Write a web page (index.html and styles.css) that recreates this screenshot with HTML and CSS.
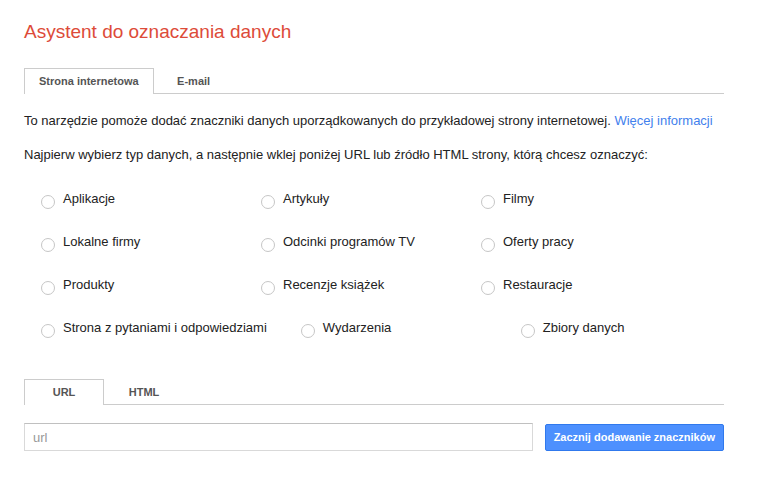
FILE: index.html
```html
<!DOCTYPE html>
<html lang="pl">
<head>
  <meta charset="UTF-8">
  <meta name="viewport" content="width=device-width, initial-scale=1.0">
  <title>Asystent do oznaczania danych</title>
  <link rel="stylesheet" href="styles.css">
</head>
<body>
  <div class="page">
    <h1 class="title">Asystent do oznaczania danych</h1>

    <div class="tabs">
      <div class="tab active">Strona internetowa</div>
      <div class="tab">E-mail</div>
    </div>

    <p class="intro">To narzędzie pomoże dodać znaczniki danych uporządkowanych do przykładowej strony internetowej. <a href="#">Więcej informacji</a></p>
    <p class="intro second">Najpierw wybierz typ danych, a następnie wklej poniżej URL lub źródło HTML strony, którą chcesz oznaczyć:</p>

    <div class="types">
      <div class="type-row">
        <label class="type"><span class="radio"></span>Aplikacje</label>
        <label class="type"><span class="radio"></span>Artykuły</label>
        <label class="type"><span class="radio"></span>Filmy</label>
      </div>
      <div class="type-row">
        <label class="type"><span class="radio"></span>Lokalne firmy</label>
        <label class="type"><span class="radio"></span>Odcinki programów TV</label>
        <label class="type"><span class="radio"></span>Oferty pracy</label>
      </div>
      <div class="type-row">
        <label class="type"><span class="radio"></span>Produkty</label>
        <label class="type"><span class="radio"></span>Recenzje książek</label>
        <label class="type"><span class="radio"></span>Restauracje</label>
      </div>
      <div class="type-row">
        <label class="type"><span class="radio"></span>Strona z pytaniami i odpowiedziami</label>
        <label class="type"><span class="radio"></span>Wydarzenia</label>
        <label class="type"><span class="radio"></span>Zbiory danych</label>
      </div>
    </div>

    <div class="tabs source-tabs">
      <div class="tab active">URL</div>
      <div class="tab">HTML</div>
    </div>

    <div class="url-form">
      <input class="url-input" type="text" placeholder="url">
      <button class="start-btn">Zacznij dodawanie znaczników</button>
    </div>
  </div>
</body>
</html>
```

FILE: styles.css
```css
* {
  margin: 0;
  padding: 0;
  box-sizing: border-box;
}

body {
  font-family: 'Liberation Sans', Arial, sans-serif;
  font-size: 13px;
  color: #222;
  background: #fff;
}

.page {
  width: 748px;
  padding: 20px 0 0 24px;
}

.title {
  font-size: 19px;
  font-weight: normal;
  line-height: 24px;
  color: #dd4b39;
}

.tabs {
  display: flex;
  width: 700px;
  height: 26px;
  margin-top: 24px;
  border-bottom: 1px solid #ccc;
}

.tab {
  min-width: 80px;
  height: 26px;
  padding: 0 14px;
  border: 1px solid transparent;
  border-bottom: none;
  font-size: 11px;
  font-weight: bold;
  line-height: 24px;
  text-align: center;
  color: #555;
}

.tab.active {
  border-color: #ccc;
  background: #fff;
}

.intro {
  margin-top: 19px;
  line-height: 16px;
}

.intro.second {
  margin-top: 18px;
}

.intro a {
  color: #427fed;
  text-decoration: none;
}

.types {
  margin-top: 28px;
  padding-left: 17px;
}

.type-row {
  display: flex;
  height: 16px;
  margin-bottom: 27px;
}

.type-row:last-child {
  margin-bottom: 0;
}

.type {
  display: flex;
  align-items: flex-start;
  min-width: 186px;
  margin-right: 34px;
  line-height: 16px;
  white-space: nowrap;
}

.radio {
  width: 14px;
  height: 14px;
  margin: 4px 8px 0 0;
  border: 1px solid #c6c6c6;
  border-radius: 50%;
  background: #fff;
}

.source-tabs {
  margin-top: 43px;
  height: 26px;
}

.source-tabs .tab {
  height: 26px;
}

.url-form {
  display: flex;
  align-items: center;
  width: 700px;
  margin-top: 18px;
}

.url-input {
  width: 509px;
  height: 28px;
  padding: 0 8px;
  border: 1px solid #d9d9d9;
  border-top-color: #c0c0c0;
  font-family: inherit;
  font-size: 13px;
  color: #222;
  outline: none;
}

.url-input::placeholder {
  color: #999;
}

.start-btn {
  height: 27px;
  margin-left: 12px;
  padding: 0 8px;
  border: 1px solid #3079ed;
  border-radius: 2px;
  background: #4d90fe;
  color: #fff;
  font-family: inherit;
  font-size: 11px;
  font-weight: bold;
  white-space: nowrap;
}
```
